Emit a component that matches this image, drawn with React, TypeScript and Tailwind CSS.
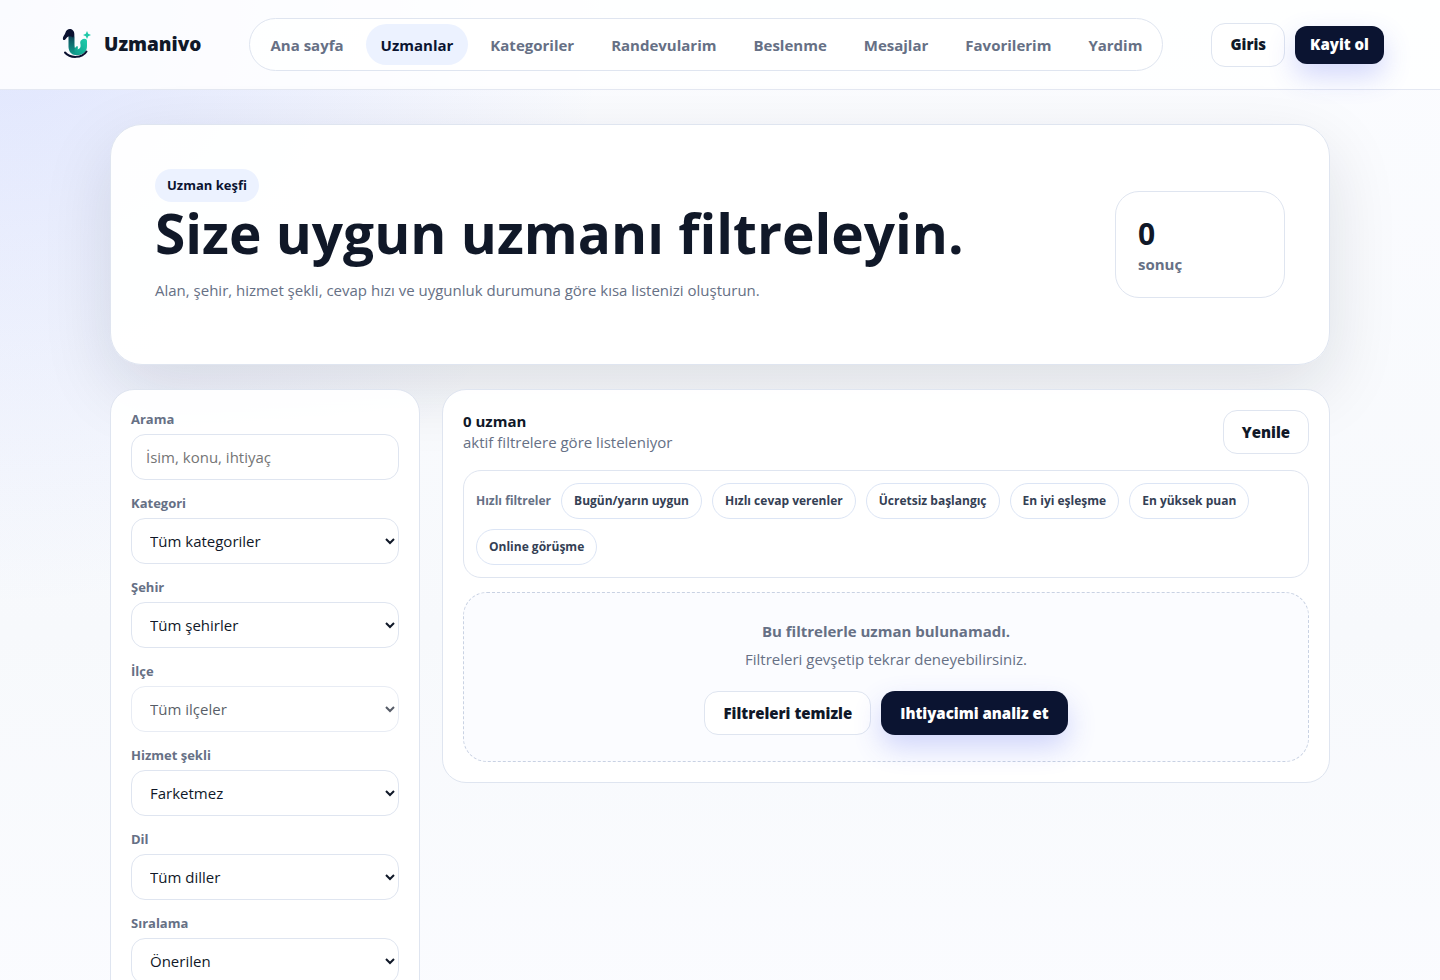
import React from 'react';

const NAV_ITEMS = ['Ana sayfa', 'Uzmanlar', 'Kategoriler', 'Randevularim', 'Beslenme', 'Mesajlar', 'Favorilerim', 'Yardim'];

const QUICK_FILTERS = [
    'Bugün/yarın uygun',
    'Hızlı cevap verenler',
    'Ücretsiz başlangıç',
    'En iyi eşleşme',
    'En yüksek puan',
    'Online görüşme',
];

const SELECTS = [
    { id: 'category', label: 'Kategori', value: 'Tüm kategoriler' },
    { id: 'city', label: 'Şehir', value: 'Tüm şehirler' },
    { id: 'district', label: 'İlçe', value: 'Tüm ilçeler', disabled: true },
    { id: 'service', label: 'Hizmet şekli', value: 'Farketmez' },
    { id: 'language', label: 'Dil', value: 'Tüm diller' },
    { id: 'sort', label: 'Sıralama', value: 'Önerilen' },
];

const Logo: React.FC = () => (
    <svg viewBox="0 0 40 40" className="w-10 h-10 shrink-0" aria-hidden="true">
        <defs>
            <linearGradient id="stem" x1="0" y1="0" x2="0" y2="1">
                <stop offset="0" stopColor="#0b1638" />
                <stop offset="0.4" stopColor="#0f5f68" />
                <stop offset="1" stopColor="#12a18f" />
            </linearGradient>
            <linearGradient id="arm" x1="0" y1="1" x2="1" y2="0">
                <stop offset="0" stopColor="#0e9a8a" />
                <stop offset="1" stopColor="#1fd0ad" />
            </linearGradient>
        </defs>
        <path d="M11.500 7 C15 5 18.500 7 18.500 12 V20 C18.500 23 19.500 25 21 27 L27 28 C22 32 13 31 12.500 22 V12 Z" fill="url(#stem)" />
        <path d="M25.500 15 C27.500 13 31 13.500 31 16 V21 C31 28 25 31 20.500 29 C17 27 18 22 21.500 21 C22 22.500 22 23.500 21.500 24.500 C24 24 25 22 24.500 19.500 C24 17.500 24 16 25.500 15 Z" fill="url(#arm)" />
        <path d="M7 14.500 C6.500 11.500 8.500 10.500 9.500 7.500 C10.500 4 14.500 3 17 5.500 C19 7.500 18.500 11.500 17 12.500 C14.500 10.500 12 11 10.500 13 C9.500 14.500 8 16 7 14.500 Z" fill="#0a1130" />
        <path d="M9 27.500 C14 33.500 26 33.500 30.500 26.500" fill="none" stroke="#0a1130" strokeWidth="2" strokeLinecap="round" />
        <path d="M31 6 L32.200 8.800 L35 10 L32.200 11.200 L31 14 L29.800 11.200 L27 10 L29.800 8.800 Z" fill="#1fc9a9" />
    </svg>
);

const Header: React.FC = () => (
    <header className="border-b border-[#e4e8f2] bg-white/85">
        <div className="flex items-center justify-between px-14 h-[89px]">
            <a href="#" className="flex items-center gap-2 text-[19px] font-extrabold text-[#101828]">
                <Logo />
                Uzmanivo
            </a>

            <nav className="flex items-center gap-[7px] rounded-full border border-[#dfe5f0] bg-white/80 p-[5px]">
                {NAV_ITEMS.map((item) => (
                    <a
                        key={item}
                        href="#"
                        className={
                            item === 'Uzmanlar'
                                ? 'rounded-full bg-[#ecf2ff] px-[15px] pt-[9px] pb-[7px] text-[15px] leading-[25px] font-bold text-[#0b1431]'
                                : 'rounded-full px-[15px] pt-[9px] pb-[7px] text-[15px] leading-[25px] font-bold text-[#667085]'
                        }
                    >
                        {item}
                    </a>
                ))}
            </nav>

            <div className="flex items-center gap-2.5">
                <button className="h-11 rounded-[14px] border border-[#dfe5f0] bg-white px-[18px] text-[15px] font-extrabold text-[#101828]">
                    Giris
                </button>
                <button className="h-[38px] rounded-xl bg-[#0b1431] px-[15px] text-[15px] font-extrabold text-white shadow-[0_12px_28px_rgba(69,88,240,0.24)]">
                    Kayit ol
                </button>
            </div>
        </div>
    </header>
);

const Hero: React.FC = () => (
    <section className="flex items-center justify-between gap-6 rounded-[32px] border border-[#dfe5f0] bg-white/95 p-11 shadow-[0_24px_70px_rgba(15,23,42,0.12)]">
        <div>
            <span className="inline-flex rounded-full bg-[#ecf2ff] px-3 py-1.5 text-[13px] leading-[21px] font-bold text-[#0b1431]">
                Uzman keşfi
            </span>
            <h1 className="text-[55px] leading-[62px] font-bold text-[#101828]">Size uygun uzmanı filtreleyin.</h1>
            <p className="mt-3 mb-4 text-[15px] leading-7 text-[#667085]">
                Alan, şehir, hizmet şekli, cevap hızı ve uygunluk durumuna göre kısa listenizi oluşturun.
            </p>
        </div>
        <div className="flex w-[170px] shrink-0 flex-col rounded-3xl border border-[#dfe5f0] bg-white px-[22px] pt-6 pb-5">
            <strong className="text-[30px] leading-9 text-[#101828]">0</strong>
            <span className="text-[15px] leading-[25px] font-bold text-[#667085]">sonuç</span>
        </div>
    </section>
);

const FilterSidebar: React.FC = () => (
    <aside className="flex flex-col gap-3.5 rounded-3xl border border-[#dfe5f0] bg-white/95 p-5">
        <div className="flex flex-col gap-1.5">
            <label htmlFor="search" className="text-[13px] leading-[18px] font-bold text-[#667085]">
                Arama
            </label>
            <input
                id="search"
                type="text"
                placeholder="İsim, konu, ihtiyaç"
                className="h-[46px] w-full rounded-[14px] border border-[#dfe5f0] bg-white px-3.5 text-[15px] text-[#101828] placeholder:text-[#757575]"
            />
        </div>
        {SELECTS.map(({ id, label, value, disabled }) => (
            <div key={id} className="flex flex-col gap-1.5">
                <label htmlFor={id} className="text-[13px] leading-[18px] font-bold text-[#667085]">
                    {label}
                </label>
                <select
                    id={id}
                    disabled={disabled}
                    className="h-[46px] w-full rounded-[14px] border border-[#dfe5f0] bg-white pl-3.5 text-[15px] text-[#101828] disabled:opacity-70"
                >
                    <option>{value}</option>
                </select>
            </div>
        ))}
    </aside>
);

const Results: React.FC = () => (
    <section className="rounded-3xl border border-[#dfe5f0] bg-white/95 p-5">
        <div className="flex items-center justify-between">
            <div className="flex flex-col text-[15px] leading-[21px]">
                <strong className="text-[#101828]">0 uzman</strong>
                <span className="text-[#667085]">aktif filtrelere göre listeleniyor</span>
            </div>
            <button className="h-11 rounded-[14px] border border-[#dfe5f0] bg-white px-[18px] text-[15px] font-extrabold text-[#101828]">
                Yenile
            </button>
        </div>

        <div className="mt-4 flex flex-wrap items-center gap-2.5 rounded-[18px] border border-[#dfe5f0] bg-white p-3">
            <span className="text-xs font-bold text-[#667085]">Hızlı filtreler</span>
            {QUICK_FILTERS.map((filter) => (
                <button key={filter} className="h-9 rounded-full border border-[#dce5f5] bg-white px-3 text-xs font-bold text-[#344054]">
                    {filter}
                </button>
            ))}
        </div>

        <div className="mt-3.5 flex flex-col items-center rounded-3xl border border-dashed border-[#c9d2e3] bg-[#fbfcff] p-[26px] text-center text-[15px] text-[#667085]">
            <strong className="leading-6">Bu filtrelerle uzman bulunamadı.</strong>
            <p className="mt-1 leading-6">Filtreleri gevşetip tekrar deneyebilirsiniz.</p>
            <div className="mt-5 flex flex-wrap justify-center gap-2.5">
                <button className="h-11 rounded-[14px] border border-[#dfe5f0] bg-white px-[18px] font-extrabold text-[#101828]">
                    Filtreleri temizle
                </button>
                <button className="h-11 rounded-[14px] bg-[#0b1431] px-[19px] font-extrabold text-white shadow-[0_12px_28px_rgba(69,88,240,0.24)]">
                    Ihtiyacimi analiz et
                </button>
            </div>
        </div>
    </section>
);

export default function App() {
    return (
        <div className="min-h-screen bg-[radial-gradient(circle_at_top_left,rgba(79,110,247,0.16),transparent_34%),linear-gradient(180deg,#fbfcff_0%,#f7f9fc_60%,#fbfcff_100%)] font-['Open_Sans','Noto_Sans',sans-serif]">
            <Header />
            <main className="mx-auto flex max-w-[1220px] flex-col gap-6 pt-[34px] pb-12">
                <Hero />
                <div className="grid grid-cols-[310px_minmax(0,1fr)] items-start gap-[22px]">
                    <FilterSidebar />
                    <Results />
                </div>
            </main>
        </div>
    );
}
